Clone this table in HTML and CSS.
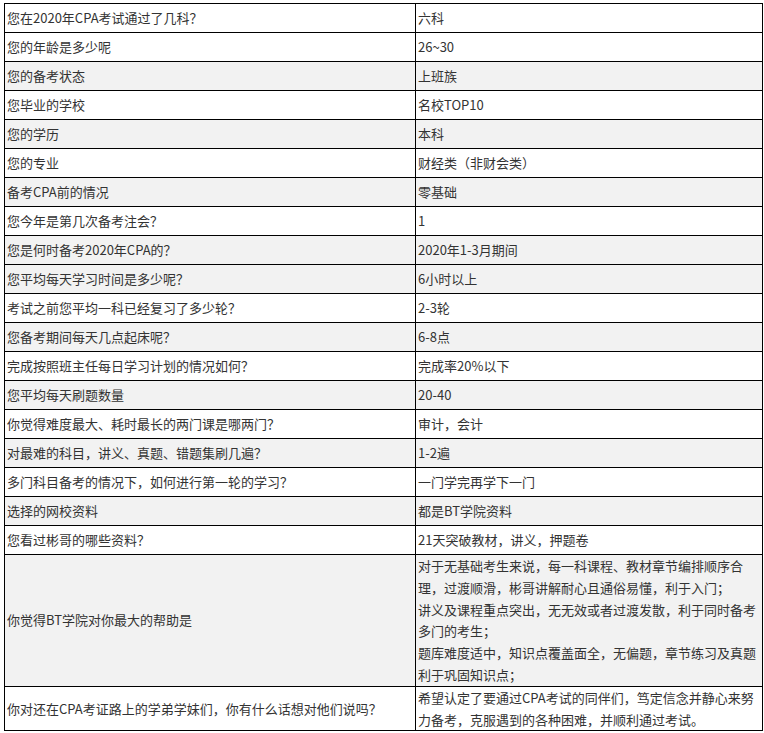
FILE: index.html
```html
<!DOCTYPE html>
<html lang="zh">
<head>
<meta charset="utf-8">
<title>CPA 调查</title>
<link rel="stylesheet" href="styles.css">
</head>
<body>
<table class="survey">
  <colgroup><col class="col-q"><col class="col-a"></colgroup>
  <tbody>
    <tr><td>您在2020年CPA考试通过了几科？</td><td>六科</td></tr>
    <tr><td>您的年龄是多少呢</td><td>26~30</td></tr>
    <tr class="alt"><td>您的备考状态</td><td>上班族</td></tr>
    <tr><td>您毕业的学校</td><td>名校TOP10</td></tr>
    <tr class="alt"><td>您的学历</td><td>本科</td></tr>
    <tr><td>您的专业</td><td>财经类（非财会类）</td></tr>
    <tr class="alt"><td>备考CPA前的情况</td><td>零基础</td></tr>
    <tr><td>您今年是第几次备考注会？</td><td>1</td></tr>
    <tr class="alt"><td>您是何时备考2020年CPA的？</td><td>2020年1-3月期间</td></tr>
    <tr class="alt"><td>您平均每天学习时间是多少呢？</td><td>6小时以上</td></tr>
    <tr><td>考试之前您平均一科已经复习了多少轮？</td><td>2-3轮</td></tr>
    <tr class="alt"><td>您备考期间每天几点起床呢？</td><td>6-8点</td></tr>
    <tr><td>完成按照班主任每日学习计划的情况如何？</td><td>完成率20%以下</td></tr>
    <tr class="alt"><td>您平均每天刷题数量</td><td>20-40</td></tr>
    <tr><td>你觉得难度最大、耗时最长的两门课是哪两门？</td><td>审计，会计</td></tr>
    <tr class="alt"><td>对最难的科目，讲义、真题、错题集刷几遍？</td><td>1-2遍</td></tr>
    <tr><td>多门科目备考的情况下，如何进行第一轮的学习？</td><td>一门学完再学下一门</td></tr>
    <tr class="alt"><td>选择的网校资料</td><td>都是BT学院资料</td></tr>
    <tr><td>您看过彬哥的哪些资料？</td><td>21天突破教材，讲义，押题卷</td></tr>
    <tr class="alt"><td>你觉得BT学院对你最大的帮助是</td><td>对于无基础考生来说，每一科课程、教材章节编排顺序合理，过渡顺滑，彬哥讲解耐心且通俗易懂，利于入门；<br>讲义及课程重点突出，无无效或者过渡发散，利于同时备考多门的考生；<br>题库难度适中，知识点覆盖面全，无偏题，章节练习及真题利于巩固知识点；</td></tr>
    <tr><td>你对还在CPA考证路上的学弟学妹们，你有什么话想对他们说吗？</td><td>希望认定了要通过CPA考试的同伴们，笃定信念并静心来努力备考，克服遇到的各种困难，并顺利通过考试。</td></tr>
  </tbody>
</table>
</body>
</html>
```

FILE: styles.css
```css
html, body {
  margin: 0;
  padding: 0;
  background: #fff;
}

body {
  padding: 3px 0 0 4px;
  font-family: "Microsoft YaHei", "Noto Sans CJK SC", "Noto Sans", sans-serif;
  font-size: 13px;
  color: #333;
}

.survey {
  border-collapse: collapse;
  width: 758px;
  table-layout: fixed;
}

.col-q {
  width: 411px;
}

.col-a {
  width: 347px;
}

.survey td {
  border: 1px solid #000;
  height: 28px;
  padding: 0 2px 0 2px;
  line-height: 21.8px;
  vertical-align: middle;
  word-break: break-all;
  box-sizing: content-box;
}

.survey tr.alt td {
  background: #f2f2f2;
}
```
